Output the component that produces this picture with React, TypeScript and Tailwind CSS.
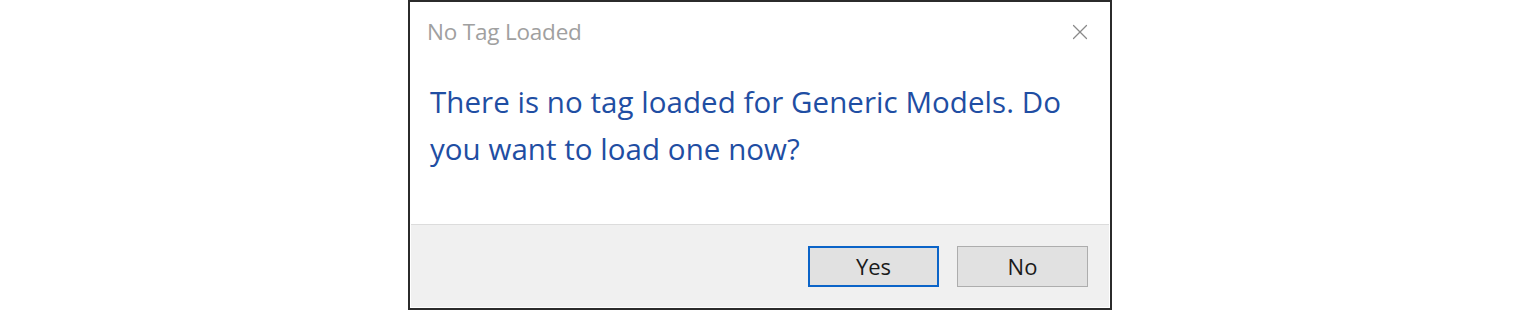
import { X } from "lucide-react";

const App = () => {
  return (
    <div className="w-[1520px] h-[310px] bg-white flex justify-center">
      <div
        className="w-[704px] h-[310px] border-2 border-[#2b2b2b] bg-white flex flex-col"
        style={{ fontFamily: '"Open Sans", "Noto Sans", sans-serif' }}>
        <div className="flex justify-between items-start pl-[17px] pr-[17px] pt-[14px]">
          <p className="text-[22.5px] leading-[32px] tracking-[-0.2px] text-[#a0a0a0]">No Tag Loaded</p>
          <X className="w-[26px] h-[26px] mt-[3px] text-[#8a8a8a]" strokeWidth={1.1} />
        </div>

        <div className="flex-1 pl-[20px] pr-[10px] pt-[30px]">
          <p className="text-[29.5px] leading-[47px] tracking-[0.05px] text-[#1f4ea3]">
            There is no tag loaded for Generic Models. Do
            <br />
            you want to load one now?
          </p>
        </div>

        <div className="h-[83px] mx-[1px] mb-[1px] bg-[#f0f0f0] border-t border-[#dcdcdc] flex justify-end items-start pt-[21px] pr-[21px] gap-[18px]">
          <button className="w-[131px] h-[41px] border-2 border-[#0b64c8] bg-[#e1e1e1] text-[22px] text-[#1a1a1a]">
            Yes
          </button>
          <button className="w-[131px] h-[41px] border border-[#adadad] bg-[#e1e1e1] text-[22px] text-[#1a1a1a]">
            No
          </button>
        </div>
      </div>
    </div>
  );
};

export default App;
